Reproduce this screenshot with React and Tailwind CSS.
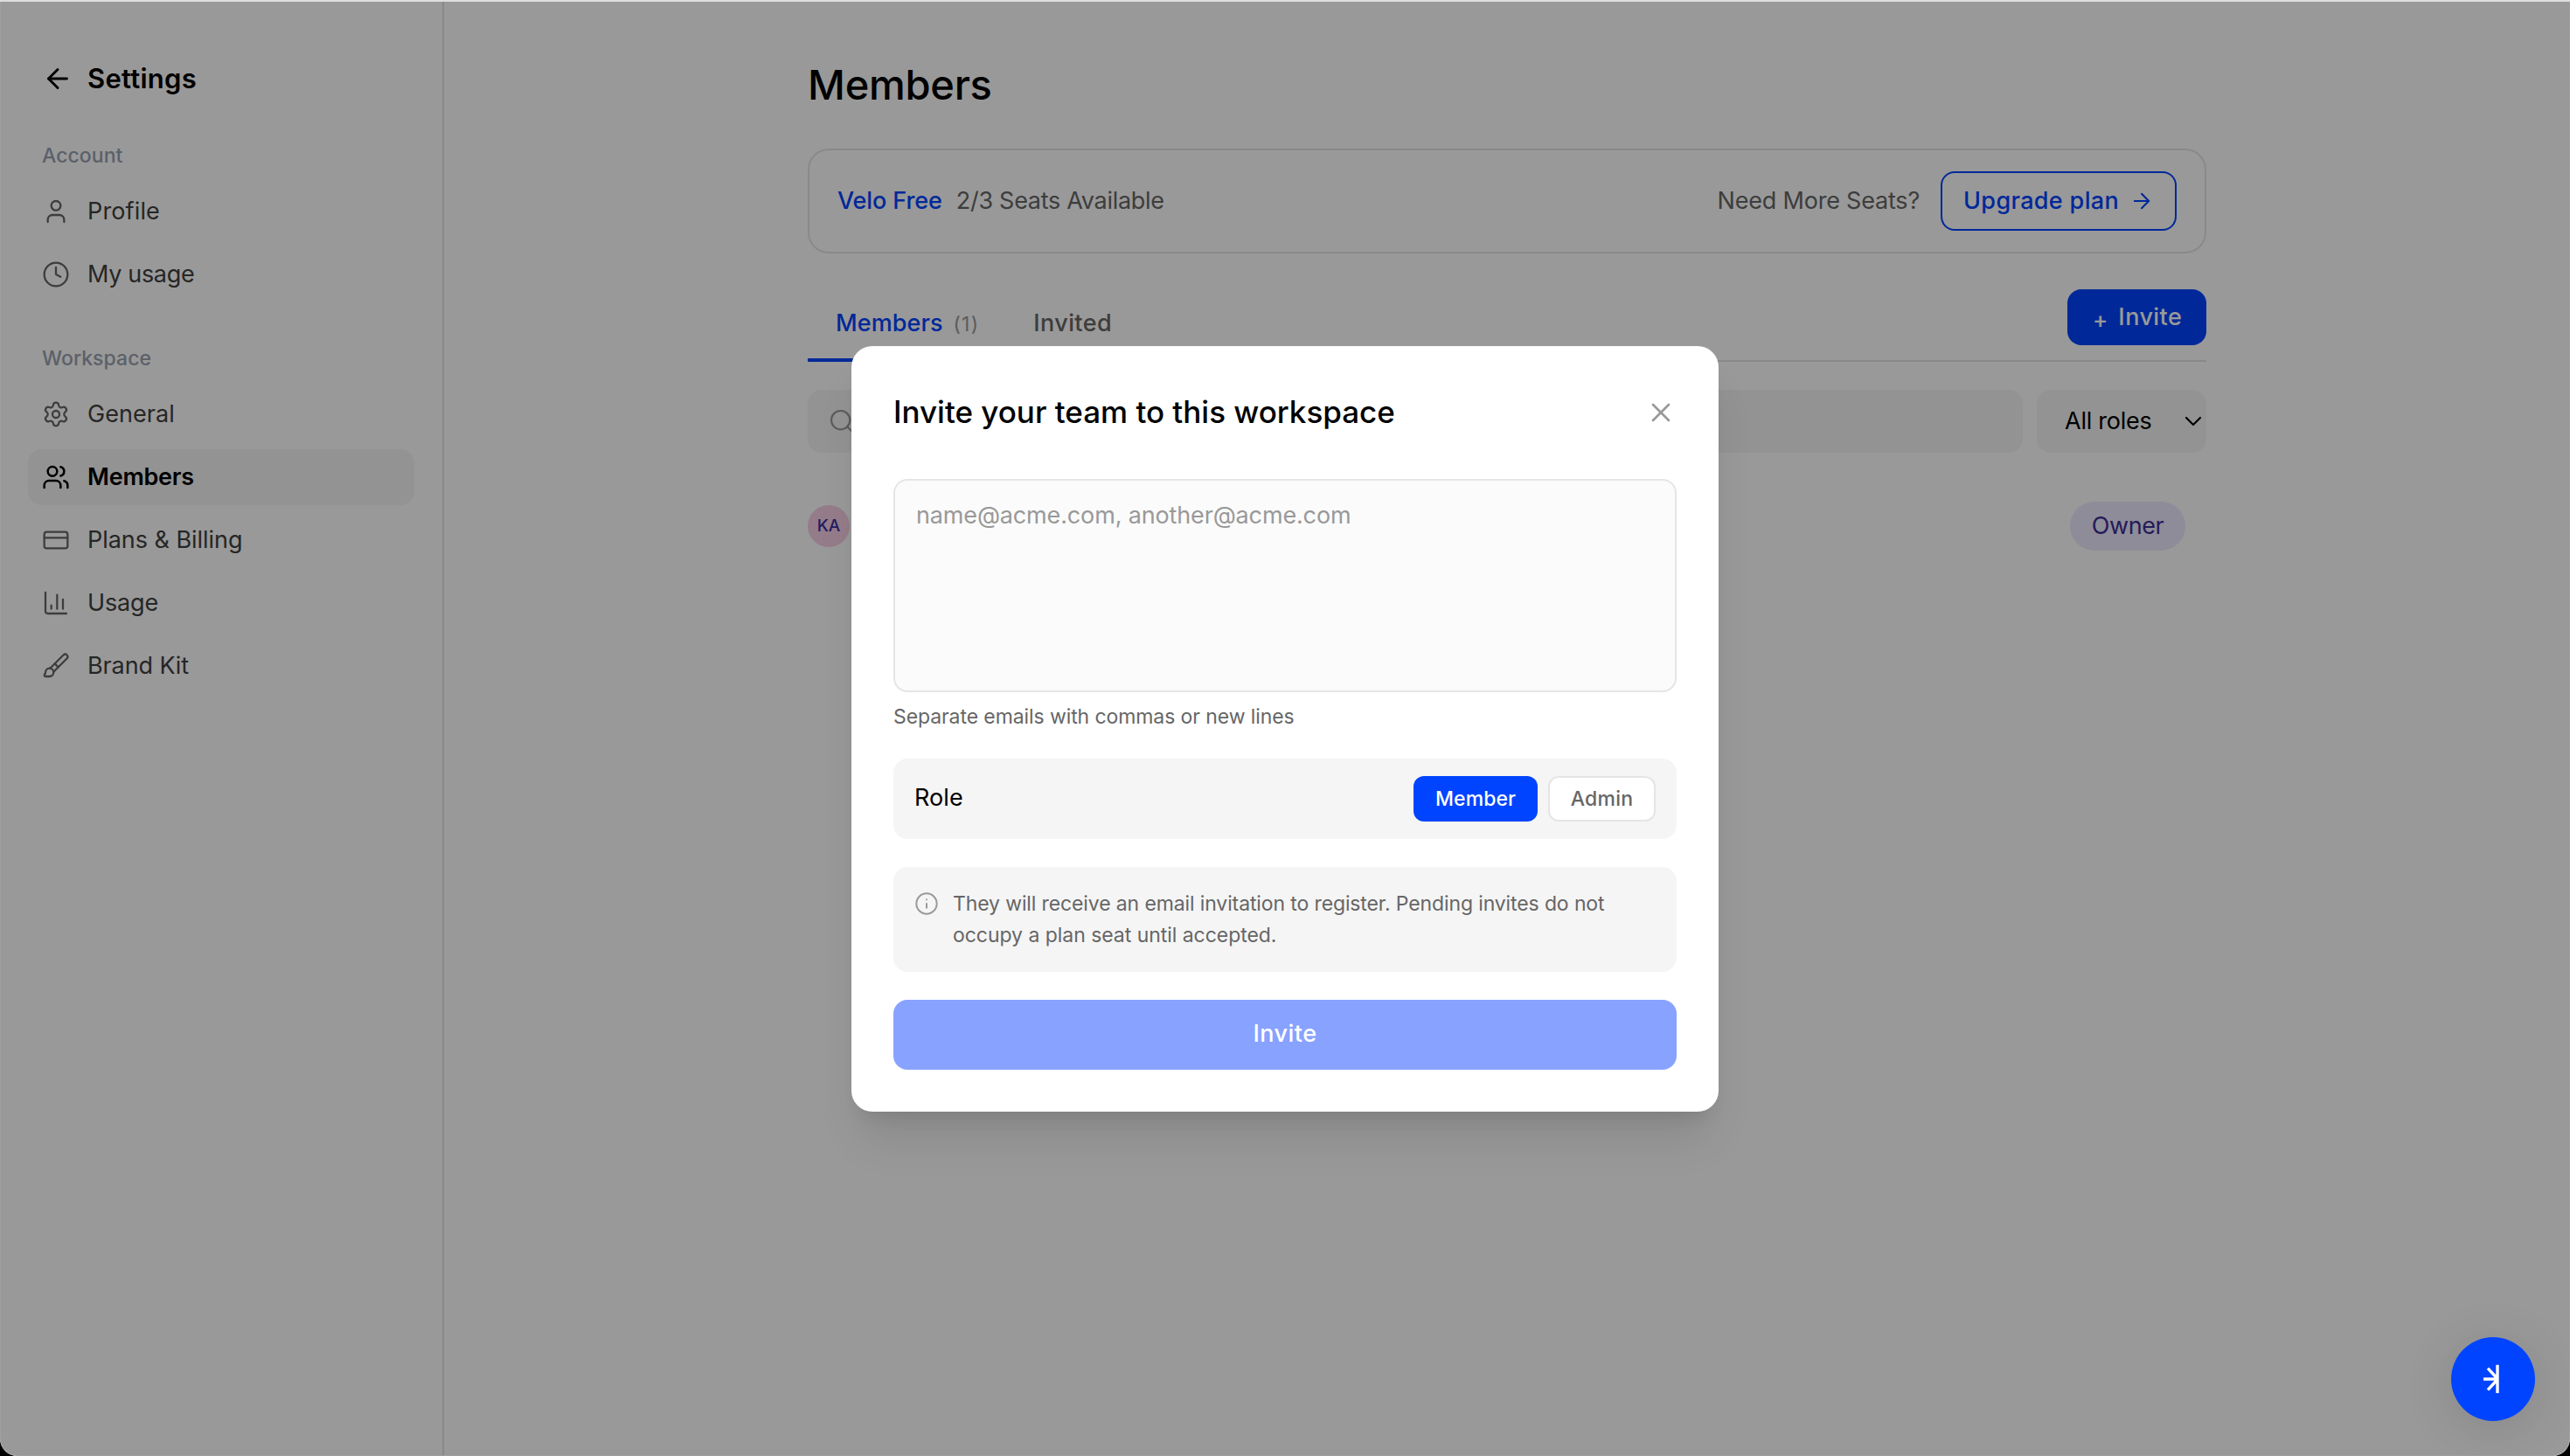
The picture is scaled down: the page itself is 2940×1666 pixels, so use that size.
import React from 'react';
import {
  ArrowLeft,
  ArrowRight,
  Brush,
  ChartColumn,
  ChevronDown,
  Clock,
  CreditCard,
  Info,
  Search,
  Settings,
  User,
  Users,
  X,
} from 'lucide-react';

const accountItems = [
  { label: 'Profile', icon: User, tracking: 'tracking-[0.14px]' },
  { label: 'My usage', icon: Clock, tracking: 'tracking-[-0.33px]' },
];

const workspaceItems = [
  { label: 'General', icon: Settings, tracking: 'tracking-[0.04px]' },
  { label: 'Members', icon: Users, tracking: 'tracking-[-0.23px]', active: true },
  { label: 'Plans & Billing', icon: CreditCard, tracking: 'tracking-[-0.04px]' },
  { label: 'Usage', icon: ChartColumn, tracking: 'tracking-[-0.17px]' },
  { label: 'Brand Kit', icon: Brush, tracking: 'tracking-[-0.11px]' },
];

const NavItem = ({ item }) => {
  const Icon = item.icon;
  return (
    <li>
      <a
        href="#"
        className={`flex h-16 items-center gap-5 rounded-2xl px-4 text-[27px] ${
          item.active ? 'bg-[#f5f5f5] font-semibold text-black' : 'text-[#404040]'
        }`}
      >
        <Icon
          className={`size-8 shrink-0 ${item.active ? 'text-black' : 'text-[#666666]'}`}
          strokeWidth={item.active ? 1.9 : 1.7}
        />
        <span className={item.tracking}>{item.label}</span>
      </a>
    </li>
  );
};

const Sidebar = () => (
  <nav className="w-[508px] shrink-0 border-r-2 border-[#e5e5e5] px-8 pt-14">
    <div className="flex h-16 items-center gap-4 px-4">
      <ArrowLeft className="size-9" strokeWidth={1.9} />
      <span className="text-[31px] font-semibold tracking-[0.25px]">Settings</span>
    </div>

    <h2 className="mt-10 h-8 px-4 text-[23px] leading-8 font-medium tracking-[0.05px] text-[#99a1af]">
      Account
    </h2>
    <ul className="mt-4 space-y-2">
      {accountItems.map((item) => (
        <NavItem key={item.label} item={item} />
      ))}
    </ul>

    <h2 className="mt-12 h-8 px-4 text-[23px] leading-8 font-medium tracking-[0.05px] text-[#99a1af]">
      Workspace
    </h2>
    <ul className="mt-4 space-y-2">
      {workspaceItems.map((item) => (
        <NavItem key={item.label} item={item} />
      ))}
    </ul>
  </nav>
);

const MembersPage = () => (
  <main className="flex flex-1 justify-center">
    <div className="w-[1600px] pt-[59px] text-[27px]">
      <h1 className="h-[72px] text-[47px] leading-[72px] font-medium tracking-[-0.25px]">Members</h1>

      {/* Plan card */}
      <section className="mt-[37px] flex h-[120px] items-center rounded-3xl border-2 border-[#e5e5e5] px-8">
        <span className="font-medium tracking-[-0.1px] text-[#0044ff]">Velo Free</span>
        <span className="ml-4 tracking-[-0.29px] text-[#666666]">2/3 Seats Available</span>
        <span className="ml-auto tracking-[-0.2px] text-[#666666]">Need More Seats?</span>
        <button className="ml-6 flex h-[68px] w-[270px] items-center justify-between rounded-2xl border-2 border-[#0044ff] px-6 font-medium text-[#0044ff]">
          <span className="tracking-[0.35px]">Upgrade plan</span>
          <ArrowRight className="size-7" strokeWidth={1.8} />
        </button>
      </section>

      {/* Tabs */}
      <div className="mt-[41px] flex h-[83px] items-start border-b-2 border-[#e5e5e5]">
        <button className="flex h-[83px] items-center border-b-4 border-[#0044ff] px-8 pb-px font-medium text-[#0044ff]">
          <span className="tracking-[0.07px]">Members</span>
          <span className="ml-3 pt-[2px] text-[23px] font-normal tracking-[1.2px] text-[#999999]">(1)</span>
        </button>
        <button className="flex h-[83px] items-center border-b-4 border-transparent pr-8 pl-[30px] pb-px font-medium tracking-[0.4px] text-[#666666]">
          Invited
        </button>
        <button className="ml-auto flex h-16 w-[159px] items-center gap-3 rounded-2xl bg-[#0044ff] pl-[29px] font-medium text-white">
          <span className="pt-1 text-[26px]">+</span>
          <span className="tracking-[0.44px]">Invite</span>
        </button>
      </div>

      {/* Filters */}
      <div className="mt-8 flex h-[72px] gap-4">
        <div className="flex flex-1 items-center rounded-2xl bg-[#f5f5f5] pl-[23px]">
          <Search className="size-8 text-[#999999]" strokeWidth={1.6} />
        </div>
        <div className="flex w-[194px] items-center justify-between rounded-2xl bg-[#f5f5f5] pl-8">
          <span className="pt-px tracking-[-0.25px]">All roles</span>
          <ChevronDown className="-mr-px size-8 shrink-0" strokeWidth={1.6} />
        </div>
      </div>

      {/* Member row */}
      <div className="mt-14 flex h-14 items-center justify-between pr-6">
        <div className="flex size-12 items-center justify-center rounded-full bg-[#f8cfe6] text-[19px] font-medium text-[#3730a3]">
          KA
        </div>
        <span className="flex h-14 w-[132px] items-center justify-center rounded-full bg-[#ede9fe] tracking-[-0.43px] text-[#3c2e93]">
          Owner
        </span>
      </div>
    </div>
  </main>
);

const InviteModal = () => (
  <div className="w-[992px] rounded-3xl bg-white p-12 shadow-[0_40px_50px_-10px_rgba(0,0,0,0.1),0_16px_20px_-12px_rgba(0,0,0,0.1)]">
    <div className="flex h-14 items-center justify-between">
      <h2 className="text-[35px] font-medium tracking-[-0.02px]">Invite your team to this workspace</h2>
      <button className="text-[#999999]">
        <X className="size-9" strokeWidth={1.8} />
      </button>
    </div>

    <textarea
      className="mt-12 block h-[244px] w-full resize-none rounded-2xl border-2 border-[#e5e5e5] bg-[#fbfbfb] px-6 py-5 text-[27px] leading-10 tracking-[-0.15px] placeholder:text-[#999999]"
      placeholder="name@acme.com, another@acme.com"
    />
    <p className="mt-3 h-8 text-[23px] leading-8 tracking-[-0.09px] text-[#666666]">
      Separate emails with commas or new lines
    </p>

    <div className="mt-8 flex h-[92px] items-center gap-3 rounded-2xl bg-[#f5f5f5] px-6">
      <span className="mr-auto text-[27px] tracking-[0.06px]">Role</span>
      <button className="h-[52px] w-[142px] rounded-xl bg-[#0044ff] pt-px text-[23px] font-medium tracking-[0.07px] text-white">
        Member
      </button>
      <button className="h-[52px] w-[123px] rounded-xl border-2 border-[#e5e5e5] bg-white pt-px text-[23px] font-medium tracking-[0.22px] text-[#666666]">
        Admin
      </button>
    </div>

    <div className="mt-8 flex h-[120px] gap-4 rounded-2xl bg-[#f5f5f5] px-6 pt-6">
      <Info className="mt-1 size-7 shrink-0 text-[#999999]" strokeWidth={1.7} />
      <p className="text-[23px] leading-9 tracking-[-0.12px] whitespace-nowrap text-[#666666]">
        They will receive an email invitation to register. Pending invites do not
        <br />
        <span className="tracking-[-0.04px]">occupy a plan seat until accepted.</span>
      </p>
    </div>

    <button className="mt-8 block h-20 w-full rounded-2xl bg-[#88a2ff] text-[27px] font-medium tracking-[0.44px] text-white">
      Invite
    </button>
  </div>
);

const HelpButton = () => (
  <button className="absolute right-10 bottom-10 size-24 rounded-full bg-[#0044ff] shadow-[0_8px_60px_rgba(0,0,0,0.12)]">
    <svg viewBox="0 0 96 96" className="size-24" fill="none" stroke="white" strokeWidth="3.4">
      <path d="M53 31.7V64M37 48H53M42 35.7L53 47.5M42 60.3L53 48.5" />
    </svg>
  </button>
);

const App = () => {
  return (
    <div className="h-[1666px] bg-black font-['Inter',sans-serif] text-black">
      <div className="relative flex h-[1666px] overflow-hidden rounded-b-[20px] border-t-2 border-[#dedede] bg-white">
        <Sidebar />
        <MembersPage />

        {/* Backdrop */}
        <div className="absolute inset-0 flex items-center justify-center rounded-b-[20px] border-x border-b border-[#a0a0a0] bg-black/40">
          <InviteModal />
        </div>

        <HelpButton />
      </div>
    </div>
  );
};

export default App;
